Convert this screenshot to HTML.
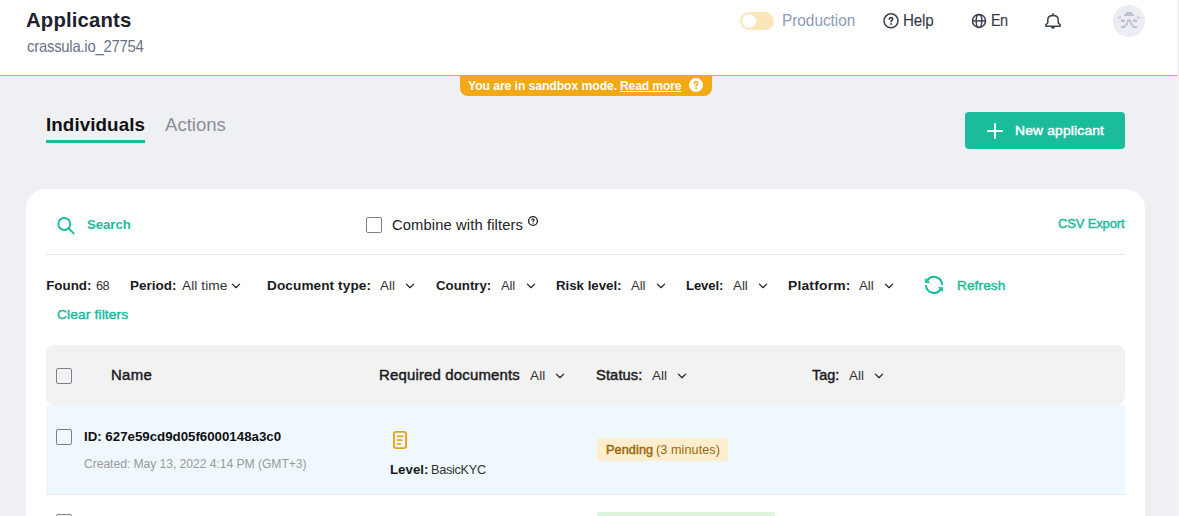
<!DOCTYPE html>
<html><head><meta charset="utf-8"><title>Applicants</title>
<style>
html,body{margin:0;padding:0;}
body{width:1179px;height:516px;overflow:hidden;position:relative;background:#eff0f4;font-family:"Liberation Sans",sans-serif;}
.a{position:absolute;display:block;}
.t{position:absolute;white-space:pre;transform-origin:0 0;font-family:"Liberation Sans",sans-serif;}
.cb{position:absolute;width:14px;height:14px;border:1px solid #7b8090;border-radius:2px;background:transparent;}
</style></head><body>
<!-- header -->
<div class="a" style="left:0;top:0;width:1177px;height:75px;background:#fff;"></div>
<div class="a" style="left:0;top:75px;width:1177px;height:1px;background:#f2a913;"></div>
<div class="a" style="left:1177px;top:0;width:2px;height:516px;background:#f1f2f5;"></div>
<!-- toggle -->
<div class="a" style="left:740px;top:12px;width:34px;height:18px;border-radius:9px;background:#fbe5bb;"></div>
<div class="a" style="left:742px;top:14px;width:14px;height:14px;border-radius:7px;background:#fff;"></div>
<!-- help icon -->
<svg class="a" style="left:881px;top:11px" width="20" height="20" viewBox="0 0 20 20"><circle cx="10" cy="9.800" r="7" fill="none" stroke="#39414f" stroke-width="1.500"/><path d="M8.300 8.300 C8.300 7.100 9.100 6.600 10 6.600 C11 6.600 11.700 7.200 11.700 8.100 C11.700 9.300 10.100 9.400 10.100 10.800" fill="none" stroke="#39414f" stroke-width="1.600" stroke-linecap="round"/><circle cx="10.100" cy="13" r="0.950" fill="#39414f"/></svg>
<!-- globe -->
<svg class="a" style="left:969px;top:11px" width="20" height="20" viewBox="0 0 20 20"><g fill="none" stroke="#39414f" stroke-width="1.500"><circle cx="10" cy="9.900" r="6.500"/><ellipse cx="10" cy="9.900" rx="2.800" ry="6.500"/><path d="M3.500 9.900 H16.500"/></g></svg>
<!-- bell -->
<svg class="a" style="left:1043px;top:11px" width="20" height="20" viewBox="0 0 20 20"><path d="M4.800 11.600 V8.800 C4.800 6.200 7 4.500 10 4.500 C13 4.500 15.200 6.200 15.200 8.800 V11.600 C15.200 12.600 17.400 13.200 17.400 14.400 C17.400 15 17 15.200 16.500 15.200 H3.500 C3 15.200 2.600 15 2.600 14.400 C2.600 13.200 4.800 12.600 4.800 11.600 Z" fill="none" stroke="#39414f" stroke-width="1.500" stroke-linejoin="round"/><path d="M10 2.700 V4.500" stroke="#39414f" stroke-width="1.600" stroke-linecap="round"/><path d="M8 15.800 H12 C12 17 11.200 17.700 10 17.700 C8.800 17.700 8 17 8 15.800 Z" fill="#39414f"/></svg>
<!-- avatar -->
<div class="a" style="left:1113px;top:5px;width:32px;height:32px;border-radius:16px;background:#ecedf2;"></div>
<svg class="a" style="left:1113px;top:5px" width="32" height="32" viewBox="0 0 32 32"><g fill="#bcc1cd"><rect x="13" y="7" width="6" height="2"/><rect x="11" y="9" width="10" height="2"/><rect x="5" y="11.5" width="3" height="2" opacity=".8"/><rect x="24" y="11.5" width="3" height="2" opacity=".8"/><rect x="8" y="14.5" width="4" height="2.5"/><rect x="14" y="14.5" width="4" height="2.5"/><rect x="20" y="14.5" width="4" height="2.5"/><rect x="13" y="17" width="2" height="3" opacity=".8"/><rect x="17" y="17" width="2" height="3" opacity=".8"/><rect x="11" y="19.5" width="2.5" height="2.5" opacity=".8"/><rect x="18.500" y="19.5" width="2.5" height="2.500" opacity=".8"/><rect x="8" y="21" width="4" height="2"/><rect x="20" y="21" width="4" height="2"/></g></svg>
<!-- banner -->
<div class="a" style="left:460px;top:76px;width:252px;height:20px;border-radius:0 0 8px 8px;background:#f2a913;"></div>
<div class="a" style="left:688.700px;top:78.400px;width:14px;height:14px;border-radius:7px;background:#fff;"></div>
<svg class="a" style="left:688.700px;top:78.400px" width="14" height="14" viewBox="0 0 14 14"><path d="M5.200 5.500 C5.200 4.300 6 3.700 7 3.700 C8 3.700 8.800 4.300 8.800 5.300 C8.800 6.600 7.100 6.700 7.100 8.100" fill="none" stroke="#f2a913" stroke-width="1.500" stroke-linecap="round"/><circle cx="7.100" cy="10.300" r="0.950" fill="#f2a913"/></svg>
<!-- tabs underline -->
<div class="a" style="left:46px;top:140px;width:99px;height:3px;background:#1abc9c;"></div>
<!-- button -->
<div class="a" style="left:965px;top:112px;width:160px;height:37px;border-radius:4px;background:#1abc9c;"></div>
<svg class="a" style="left:985px;top:121.200px" width="20" height="20" viewBox="0 0 20 20"><path d="M10 2.200 V17.800 M2.200 10 H17.800" stroke="#fff" stroke-width="2" fill="none"/></svg>
<!-- card -->
<div class="a" style="left:26px;top:189px;width:1119px;height:340px;border-radius:20px 20px 0 0;background:#fff;"></div>
<!-- search icon -->
<svg class="a" style="left:54px;top:214px" width="24" height="24" viewBox="0 0 24 24"><g fill="none" stroke="#1abc9c" stroke-width="1.900" stroke-linecap="round"><circle cx="10.300" cy="10" r="5.950"/><path d="M14.700 14.500 L19.600 19.400"/></g></svg>
<div class="cb" style="left:366px;top:217px;"></div>
<!-- small help -->
<svg class="a" style="left:527px;top:215.200px" width="12" height="12" viewBox="0 0 12 12"><circle cx="6" cy="6" r="4.400" fill="none" stroke="#222" stroke-width="1.350"/><path d="M4.900 5 C4.900 4.200 5.400 3.800 6 3.800 C6.700 3.800 7.100 4.200 7.100 4.800 C7.100 5.600 6.100 5.700 6.100 6.500" fill="none" stroke="#222" stroke-width="1.150" stroke-linecap="round"/><circle cx="6.100" cy="8.100" r="0.700" fill="#222"/></svg>
<div class="a" style="left:46px;top:254px;width:1079px;height:1px;background:#e6e6e6;"></div>
<!-- refresh icon -->
<svg class="a" style="left:923px;top:274px" width="22" height="22" viewBox="0 0 22 22"><g fill="none" stroke="#1abc9c" stroke-width="2"><path d="M4.370 6.430 A8 8 0 0 1 19 10.900"/><path d="M3 10.900 A8 8 0 0 0 17.630 15.370"/></g><g fill="#1abc9c" stroke="#1abc9c" stroke-width="0.500" stroke-linejoin="round"><path d="M2.200 4.200 V8.800 H6.800 Z"/><path d="M15.300 13.300 H19.700 V17.700 Z"/></g></svg>
<!-- table header -->
<div class="a" style="left:46px;top:345px;width:1079px;height:60px;border-radius:8px;background:#f2f2f2;"></div>
<div class="a" style="left:46px;top:405px;width:1079px;height:89px;background:#f0f8ff;"></div>
<div class="a" style="left:46px;top:494px;width:1079px;height:1px;background:#e4e7ec;"></div>
<div class="cb" style="left:56px;top:368px;"></div>
<div class="cb" style="left:56px;top:429px;"></div>
<div class="cb" style="left:56px;top:514px;"></div>
<!-- doc icon -->
<svg class="a" style="left:391px;top:429px" width="18" height="22" viewBox="0 0 18 22"><g fill="none" stroke="#eaa417" stroke-width="1.900"><rect x="2.900" y="2.900" width="12.200" height="16.200" rx="2"/><path d="M5.900 7.300 H12.200 M5.900 11.100 H11.300 M5.900 14.800 H9.900" stroke-width="1.800"/></g></svg>
<!-- badges -->
<div class="a" style="left:597px;top:438px;width:131px;height:23px;border-radius:2px;background:#fdeecf;"></div>
<div class="a" style="left:597px;top:512px;width:178px;height:10px;border-radius:2px;background:#dff4dc;"></div>
<svg class="a" style="left:229.8px;top:280.0px" width="12" height="12" viewBox="0 0 12 12"><path d="M2.4 4.1 L6 7.7 L9.6 4.1" fill="none" stroke="#222" stroke-width="1.25" stroke-linecap="round" stroke-linejoin="round"/></svg>
<svg class="a" style="left:404.4px;top:280.0px" width="12" height="12" viewBox="0 0 12 12"><path d="M2.4 4.1 L6 7.7 L9.6 4.1" fill="none" stroke="#222" stroke-width="1.25" stroke-linecap="round" stroke-linejoin="round"/></svg>
<svg class="a" style="left:525.3px;top:280.0px" width="12" height="12" viewBox="0 0 12 12"><path d="M2.4 4.1 L6 7.7 L9.6 4.1" fill="none" stroke="#222" stroke-width="1.25" stroke-linecap="round" stroke-linejoin="round"/></svg>
<svg class="a" style="left:654.5px;top:280.0px" width="12" height="12" viewBox="0 0 12 12"><path d="M2.4 4.1 L6 7.7 L9.6 4.1" fill="none" stroke="#222" stroke-width="1.25" stroke-linecap="round" stroke-linejoin="round"/></svg>
<svg class="a" style="left:757.3px;top:280.0px" width="12" height="12" viewBox="0 0 12 12"><path d="M2.4 4.1 L6 7.7 L9.6 4.1" fill="none" stroke="#222" stroke-width="1.25" stroke-linecap="round" stroke-linejoin="round"/></svg>
<svg class="a" style="left:883.1px;top:280.0px" width="12" height="12" viewBox="0 0 12 12"><path d="M2.4 4.1 L6 7.7 L9.6 4.1" fill="none" stroke="#222" stroke-width="1.25" stroke-linecap="round" stroke-linejoin="round"/></svg>
<svg class="a" style="left:554.2px;top:370.3px" width="12" height="12" viewBox="0 0 12 12"><path d="M2.4 4.1 L6 7.7 L9.6 4.1" fill="none" stroke="#222" stroke-width="1.25" stroke-linecap="round" stroke-linejoin="round"/></svg>
<svg class="a" style="left:676.2px;top:370.3px" width="12" height="12" viewBox="0 0 12 12"><path d="M2.4 4.1 L6 7.7 L9.6 4.1" fill="none" stroke="#222" stroke-width="1.25" stroke-linecap="round" stroke-linejoin="round"/></svg>
<svg class="a" style="left:873.1px;top:370.3px" width="12" height="12" viewBox="0 0 12 12"><path d="M2.4 4.1 L6 7.7 L9.6 4.1" fill="none" stroke="#222" stroke-width="1.25" stroke-linecap="round" stroke-linejoin="round"/></svg>
<span class="t" style="left:26.49px;top:11.01px;font-size:19.85px;line-height:19.85px;color:#1c212c;letter-spacing:0.166px;transform:scaleX(1.0228);font-weight:700;">Applicants</span>
<span class="t" style="left:27.09px;top:39.00px;font-size:15.67px;line-height:15.67px;color:#6b7385;letter-spacing:-0.267px;transform:scaleX(0.9517);font-weight:400;">crassula.io_27754</span>
<span class="t" style="left:781.95px;top:13.02px;font-size:15.6px;line-height:15.6px;color:#8d9bbb;letter-spacing:-0.056px;transform:scaleX(0.9897);font-weight:400;">Production</span>
<span class="t" style="left:903.42px;top:13.02px;font-size:15.6px;line-height:15.6px;color:#333b4a;letter-spacing:-0.199px;transform:scaleX(0.9712);font-weight:400;-webkit-text-stroke:0.12px currentColor;">Help</span>
<span class="t" style="left:990.83px;top:13.02px;font-size:15.6px;line-height:15.6px;color:#333b4a;letter-spacing:-0.841px;transform:scaleX(0.9303);font-weight:400;-webkit-text-stroke:0.12px currentColor;">En</span>
<span class="t" style="left:468.07px;top:80.01px;font-size:12.54px;line-height:12.54px;color:#ffffff;letter-spacing:-0.105px;transform:scaleX(0.9770);font-weight:700;">You are in sandbox mode.</span>
<span class="t" style="left:619.52px;top:80.01px;font-size:12.54px;line-height:12.54px;color:#ffffff;letter-spacing:-0.165px;transform:scaleX(0.9698);font-weight:700;text-decoration:underline;text-underline-offset:1px;">Read more</span>
<span class="t" style="left:46.33px;top:116.01px;font-size:18.54px;line-height:18.54px;color:#111111;letter-spacing:0.082px;transform:scaleX(1.0131);font-weight:700;">Individuals</span>
<span class="t" style="left:165.00px;top:116.01px;font-size:18.54px;line-height:18.54px;color:#8b8e98;letter-spacing:0.007px;transform:scaleX(1.0010);font-weight:400;">Actions</span>
<span class="t" style="left:1014.80px;top:124.00px;font-size:13.39px;line-height:13.39px;color:#ffffff;letter-spacing:0.158px;transform:scaleX(1.0355);font-weight:400;-webkit-text-stroke:0.45px currentColor;">New applicant</span>
<span class="t" style="left:87.13px;top:218.00px;font-size:13.39px;line-height:13.39px;color:#1abc9c;letter-spacing:-0.063px;transform:scaleX(0.9892);font-weight:700;">Search</span>
<span class="t" style="left:391.78px;top:218.01px;font-size:14.42px;line-height:14.42px;color:#222222;letter-spacing:0.106px;transform:scaleX(1.0248);font-weight:400;">Combine with filters</span>
<span class="t" style="left:1057.53px;top:217.00px;font-size:13.39px;line-height:13.39px;color:#1abc9c;letter-spacing:-0.154px;transform:scaleX(0.9709);font-weight:400;-webkit-text-stroke:0.45px currentColor;">CSV Export</span>
<span class="t" style="left:46.18px;top:279.00px;font-size:13.39px;line-height:13.39px;color:#1b1b1f;letter-spacing:0.000px;transform:scaleX(1.0000);font-weight:700;">Found:</span>
<span class="t" style="left:96.01px;top:279.00px;font-size:13.39px;line-height:13.39px;color:#333333;letter-spacing:-0.484px;transform:scaleX(0.9497);font-weight:400;">68</span>
<span class="t" style="left:130.09px;top:279.00px;font-size:13.39px;line-height:13.39px;color:#1b1b1f;letter-spacing:0.027px;transform:scaleX(1.0055);font-weight:700;">Period:</span>
<span class="t" style="left:181.52px;top:279.00px;font-size:13.39px;line-height:13.39px;color:#333333;letter-spacing:0.087px;transform:scaleX(1.0216);font-weight:400;">All time</span>
<span class="t" style="left:266.59px;top:279.00px;font-size:13.39px;line-height:13.39px;color:#1b1b1f;letter-spacing:0.087px;transform:scaleX(1.0175);font-weight:700;">Document type:</span>
<span class="t" style="left:380.20px;top:279.00px;font-size:13.39px;line-height:13.39px;color:#333333;letter-spacing:0.034px;transform:scaleX(1.0072);font-weight:400;">All</span>
<span class="t" style="left:435.98px;top:279.00px;font-size:13.39px;line-height:13.39px;color:#1b1b1f;letter-spacing:-0.026px;transform:scaleX(0.9949);font-weight:700;">Country:</span>
<span class="t" style="left:501.42px;top:279.00px;font-size:13.39px;line-height:13.39px;color:#333333;letter-spacing:-0.117px;transform:scaleX(0.9756);font-weight:400;">All</span>
<span class="t" style="left:555.87px;top:279.00px;font-size:13.39px;line-height:13.39px;color:#1b1b1f;letter-spacing:-0.026px;transform:scaleX(0.9939);font-weight:700;">Risk level:</span>
<span class="t" style="left:631.00px;top:279.00px;font-size:13.39px;line-height:13.39px;color:#333333;letter-spacing:-0.060px;transform:scaleX(0.9873);font-weight:400;">All</span>
<span class="t" style="left:685.98px;top:279.00px;font-size:13.39px;line-height:13.39px;color:#1b1b1f;letter-spacing:-0.106px;transform:scaleX(0.9788);font-weight:700;">Level:</span>
<span class="t" style="left:733.30px;top:279.00px;font-size:13.39px;line-height:13.39px;color:#333333;letter-spacing:-0.006px;transform:scaleX(0.9987);font-weight:400;">All</span>
<span class="t" style="left:788.19px;top:279.00px;font-size:13.39px;line-height:13.39px;color:#1b1b1f;letter-spacing:0.172px;transform:scaleX(1.0379);font-weight:700;">Platform:</span>
<span class="t" style="left:859.20px;top:279.00px;font-size:13.39px;line-height:13.39px;color:#333333;letter-spacing:-0.018px;transform:scaleX(0.9963);font-weight:400;">All</span>
<span class="t" style="left:956.91px;top:279.01px;font-size:13.39px;line-height:13.39px;color:#1abc9c;letter-spacing:0.093px;transform:scaleX(1.0190);font-weight:400;-webkit-text-stroke:0.45px currentColor;">Refresh</span>
<span class="t" style="left:56.75px;top:308.00px;font-size:13.39px;line-height:13.39px;color:#1abc9c;letter-spacing:0.113px;transform:scaleX(1.0314);font-weight:400;-webkit-text-stroke:0.45px currentColor;">Clear filters</span>
<span class="t" style="left:111.27px;top:368.02px;font-size:14.42px;line-height:14.42px;color:#1b1b1f;letter-spacing:0.288px;transform:scaleX(1.0366);font-weight:400;-webkit-text-stroke:0.45px currentColor;">Name</span>
<span class="t" style="left:379.39px;top:368.02px;font-size:14.42px;line-height:14.42px;color:#1b1b1f;letter-spacing:0.176px;transform:scaleX(1.0353);font-weight:400;-webkit-text-stroke:0.45px currentColor;">Required documents</span>
<span class="t" style="left:530.42px;top:369.00px;font-size:13.39px;line-height:13.39px;color:#333333;letter-spacing:0.078px;transform:scaleX(1.0170);font-weight:400;">All</span>
<span class="t" style="left:595.73px;top:368.02px;font-size:14.42px;line-height:14.42px;color:#1b1b1f;letter-spacing:0.100px;transform:scaleX(1.0214);font-weight:400;-webkit-text-stroke:0.45px currentColor;">Status:</span>
<span class="t" style="left:652.00px;top:369.00px;font-size:13.39px;line-height:13.39px;color:#333333;letter-spacing:0.032px;transform:scaleX(1.0070);font-weight:400;">All</span>
<span class="t" style="left:811.90px;top:368.02px;font-size:14.42px;line-height:14.42px;color:#1b1b1f;letter-spacing:0.014px;transform:scaleX(1.0024);font-weight:400;-webkit-text-stroke:0.45px currentColor;">Tag:</span>
<span class="t" style="left:849.00px;top:369.00px;font-size:13.39px;line-height:13.39px;color:#333333;letter-spacing:0.024px;transform:scaleX(1.0052);font-weight:400;">All</span>
<span class="t" style="left:83.84px;top:430.00px;font-size:13.39px;line-height:13.39px;color:#111111;letter-spacing:-0.022px;transform:scaleX(0.9955);font-weight:700;">ID: 627e59cd9d05f6000148a3c0</span>
<span class="t" style="left:84.18px;top:458.01px;font-size:12.36px;line-height:12.36px;color:#9a9a9a;letter-spacing:-0.066px;transform:scaleX(0.9846);font-weight:400;">Created: May 13, 2022 4:14 PM (GMT+3)</span>
<span class="t" style="left:389.60px;top:463.00px;font-size:13.39px;line-height:13.39px;color:#1b1b1f;letter-spacing:-0.018px;transform:scaleX(0.9963);font-weight:700;">Level:</span>
<span class="t" style="left:430.77px;top:463.00px;font-size:13.39px;line-height:13.39px;color:#333333;letter-spacing:-0.302px;transform:scaleX(0.9487);font-weight:400;">BasicKYC</span>
<span class="t" style="left:605.62px;top:444.00px;font-size:12.36px;line-height:12.36px;color:#9a6707;letter-spacing:0.107px;transform:scaleX(1.0227);font-weight:400;-webkit-text-stroke:0.45px currentColor;">Pending</span>
<span class="t" style="left:655.87px;top:444.00px;font-size:12.36px;line-height:12.36px;color:#9a6707;letter-spacing:0.081px;transform:scaleX(1.0205);font-weight:400;">(3 minutes)</span>
</body></html>
